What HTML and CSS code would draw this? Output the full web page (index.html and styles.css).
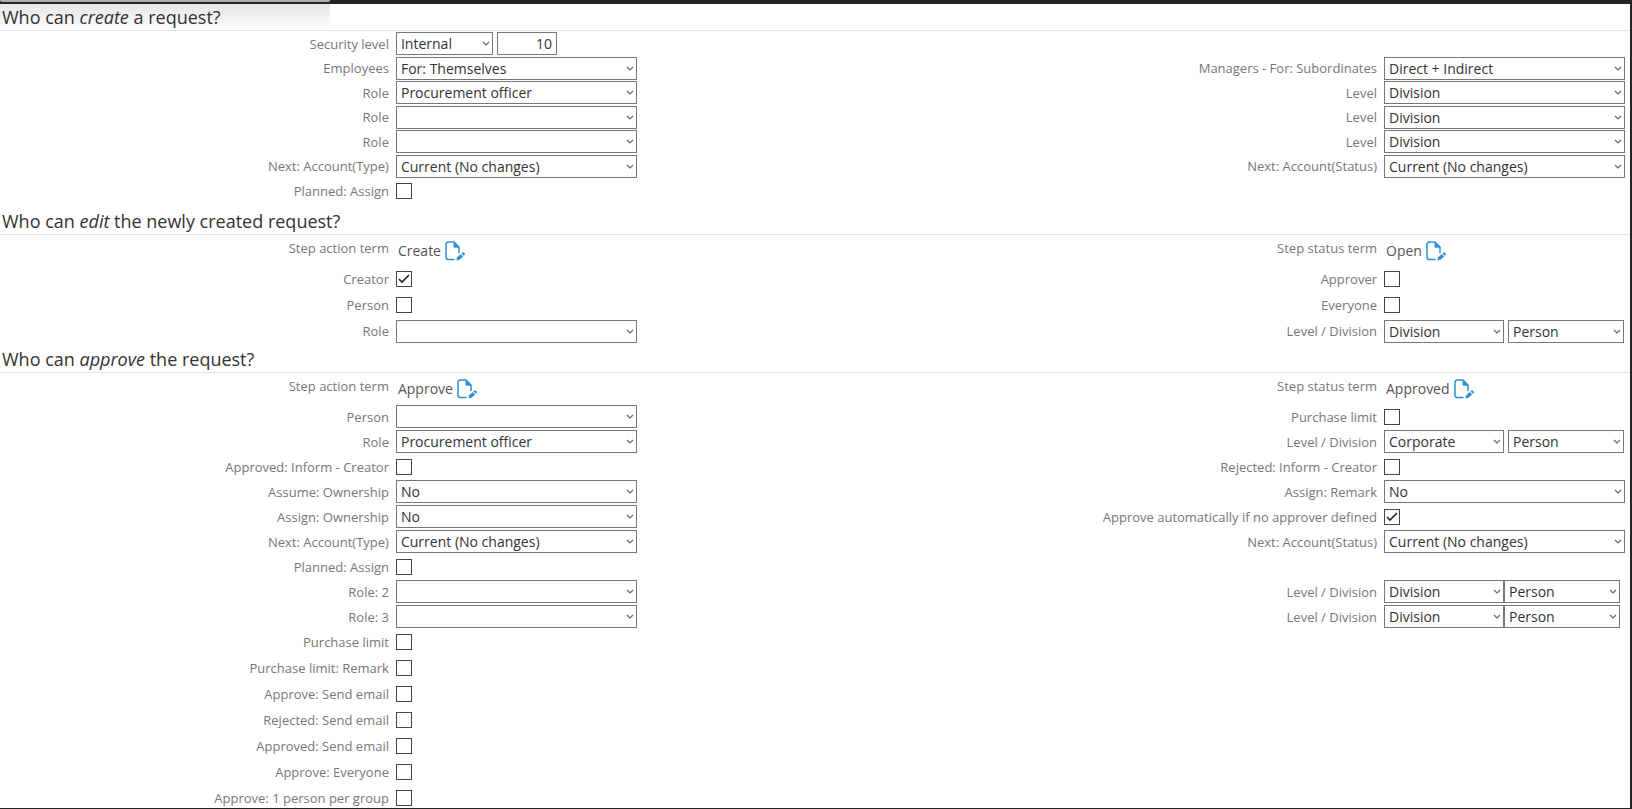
FILE: index.html
```html
<!DOCTYPE html>
<html lang="en">

<head>
    <meta charset="UTF-8">
    <meta name="viewport" content="width=device-width, initial-scale=1.0">
    <title>Request permissions</title>
    <link rel="stylesheet" href="styles.css">
</head>

<body>
    <!-- Shared pencil-on-page icon -->
    <svg class="sprite" aria-hidden="true">
        <symbol id="icon-edit" viewBox="0 0 20 20">
            <path d="M9 18.5H3.2A2.2 2.2 0 0 1 1 16.3V3.2A2.2 2.2 0 0 1 3.2 1H9l5 5v5.5" fill="none" stroke="#2f8fd6" stroke-width="1.5" stroke-linecap="round" stroke-linejoin="round" />
            <path d="M8.5 0.5L14.7 6.8H9.8A1.3 1.3 0 0 1 8.5 5.5z" fill="#2f8fd6" />
            <path d="M11.5 19.5l.6-3.2 3.7-3.3 2.3 2.5-3.6 3.3z" fill="#2f8fd6" />
            <path d="M16.5 12.4l1-.9a.9.9 0 0 1 1.2 0l1 1.1a.9.9 0 0 1 0 1.2l-.9.9z" fill="#2f8fd6" />
        </symbol>
    </svg>

    <div class="page">
        <div class="tab"></div>

        <section>
            <h2>Who can <em>create</em> a request?</h2>
            <div class="rows tight">
                <div class="row">
                    <label for="c-security">Security level</label>
                    <div class="field">
                        <select id="c-security" class="short"><option>Internal</option></select>
                        <input type="text" class="number" value="10" aria-label="Security value">
                    </div>
                </div>
                <div class="row">
                    <label for="c-employees">Employees</label>
                    <div class="field"><select id="c-employees"><option>For: Themselves</option></select></div>
                    <label for="c-managers">Managers - For: Subordinates</label>
                    <div class="field"><select id="c-managers"><option>Direct + Indirect</option></select></div>
                </div>
                <div class="row">
                    <label for="c-role1">Role</label>
                    <div class="field"><select id="c-role1"><option>Procurement officer</option></select></div>
                    <label for="c-level1">Level</label>
                    <div class="field"><select id="c-level1"><option>Division</option></select></div>
                </div>
                <div class="row">
                    <label for="c-role2">Role</label>
                    <div class="field"><select id="c-role2"><option></option></select></div>
                    <label for="c-level2">Level</label>
                    <div class="field"><select id="c-level2"><option>Division</option></select></div>
                </div>
                <div class="row">
                    <label for="c-role3">Role</label>
                    <div class="field"><select id="c-role3"><option></option></select></div>
                    <label for="c-level3">Level</label>
                    <div class="field"><select id="c-level3"><option>Division</option></select></div>
                </div>
                <div class="row">
                    <label for="c-type">Next: Account(Type)</label>
                    <div class="field"><select id="c-type"><option>Current (No changes)</option></select></div>
                    <label for="c-status">Next: Account(Status)</label>
                    <div class="field"><select id="c-status"><option>Current (No changes)</option></select></div>
                </div>
                <div class="row">
                    <label for="c-planned">Planned: Assign</label>
                    <div class="field"><input type="checkbox" id="c-planned"></div>
                </div>
            </div>
        </section>

        <section>
            <h2>Who can <em>edit</em> the newly created request?</h2>
            <div class="row term">
                <span class="label">Step action term</span>
                <div class="field">Create <button type="button" aria-label="Edit action term"><svg><use href="#icon-edit" /></svg></button></div>
                <span class="label">Step status term</span>
                <div class="field">Open <button type="button" aria-label="Edit status term"><svg><use href="#icon-edit" /></svg></button></div>
            </div>
            <div class="rows loose">
                <div class="row">
                    <label for="e-creator">Creator</label>
                    <div class="field"><input type="checkbox" id="e-creator" checked></div>
                    <label for="e-approver">Approver</label>
                    <div class="field"><input type="checkbox" id="e-approver"></div>
                </div>
                <div class="row">
                    <label for="e-person">Person</label>
                    <div class="field"><input type="checkbox" id="e-person"></div>
                    <label for="e-everyone">Everyone</label>
                    <div class="field"><input type="checkbox" id="e-everyone"></div>
                </div>
                <div class="row">
                    <label for="e-role">Role</label>
                    <div class="field"><select id="e-role"><option></option></select></div>
                    <label for="e-level">Level / Division</label>
                    <div class="field">
                        <select id="e-level" class="level"><option>Division</option></select>
                        <select class="person" aria-label="Division person"><option>Person</option></select>
                    </div>
                </div>
            </div>
        </section>

        <section>
            <h2>Who can <em>approve</em> the request?</h2>
            <div class="row term">
                <span class="label">Step action term</span>
                <div class="field">Approve <button type="button" aria-label="Edit action term"><svg><use href="#icon-edit" /></svg></button></div>
                <span class="label">Step status term</span>
                <div class="field">Approved <button type="button" aria-label="Edit status term"><svg><use href="#icon-edit" /></svg></button></div>
            </div>
            <div class="rows">
                <div class="row">
                    <label for="a-person">Person</label>
                    <div class="field"><select id="a-person"><option></option></select></div>
                    <label for="a-limit">Purchase limit</label>
                    <div class="field"><input type="checkbox" id="a-limit"></div>
                </div>
                <div class="row">
                    <label for="a-role">Role</label>
                    <div class="field"><select id="a-role"><option>Procurement officer</option></select></div>
                    <label for="a-level">Level / Division</label>
                    <div class="field">
                        <select id="a-level" class="level"><option>Corporate</option></select>
                        <select class="person" aria-label="Division person"><option>Person</option></select>
                    </div>
                </div>
                <div class="row">
                    <label for="a-inform">Approved: Inform - Creator</label>
                    <div class="field"><input type="checkbox" id="a-inform"></div>
                    <label for="a-rejected">Rejected: Inform - Creator</label>
                    <div class="field"><input type="checkbox" id="a-rejected"></div>
                </div>
                <div class="row">
                    <label for="a-assume">Assume: Ownership</label>
                    <div class="field"><select id="a-assume"><option>No</option></select></div>
                    <label for="a-remark">Assign: Remark</label>
                    <div class="field"><select id="a-remark"><option>No</option></select></div>
                </div>
                <div class="row">
                    <label for="a-assign">Assign: Ownership</label>
                    <div class="field"><select id="a-assign"><option>No</option></select></div>
                    <label for="a-auto">Approve automatically if no approver defined</label>
                    <div class="field"><input type="checkbox" id="a-auto" checked></div>
                </div>
                <div class="row">
                    <label for="a-type">Next: Account(Type)</label>
                    <div class="field"><select id="a-type"><option>Current (No changes)</option></select></div>
                    <label for="a-status">Next: Account(Status)</label>
                    <div class="field"><select id="a-status"><option>Current (No changes)</option></select></div>
                </div>
                <div class="row">
                    <label for="a-planned">Planned: Assign</label>
                    <div class="field"><input type="checkbox" id="a-planned"></div>
                </div>
                <div class="row">
                    <label for="a-role2">Role: 2</label>
                    <div class="field"><select id="a-role2"><option></option></select></div>
                    <label for="a-level2">Level / Division</label>
                    <div class="field joined">
                        <select id="a-level2" class="level"><option>Division</option></select>
                        <select class="person" aria-label="Division person 2"><option>Person</option></select>
                    </div>
                </div>
                <div class="row">
                    <label for="a-role3">Role: 3</label>
                    <div class="field"><select id="a-role3"><option></option></select></div>
                    <label for="a-level3">Level / Division</label>
                    <div class="field joined">
                        <select id="a-level3" class="level"><option>Division</option></select>
                        <select class="person" aria-label="Division person 3"><option>Person</option></select>
                    </div>
                </div>
            </div>
            <div class="rows loose">
                <div class="row">
                    <label for="a-plimit">Purchase limit</label>
                    <div class="field"><input type="checkbox" id="a-plimit"></div>
                </div>
                <div class="row">
                    <label for="a-plimit-remark">Purchase limit: Remark</label>
                    <div class="field"><input type="checkbox" id="a-plimit-remark"></div>
                </div>
                <div class="row">
                    <label for="a-mail1">Approve: Send email</label>
                    <div class="field"><input type="checkbox" id="a-mail1"></div>
                </div>
                <div class="row">
                    <label for="a-mail2">Rejected: Send email</label>
                    <div class="field"><input type="checkbox" id="a-mail2"></div>
                </div>
                <div class="row">
                    <label for="a-mail3">Approved: Send email</label>
                    <div class="field"><input type="checkbox" id="a-mail3"></div>
                </div>
                <div class="row">
                    <label for="a-everyone">Approve: Everyone</label>
                    <div class="field"><input type="checkbox" id="a-everyone"></div>
                </div>
                <div class="row">
                    <label for="a-group">Approve: 1 person per group</label>
                    <div class="field"><input type="checkbox" id="a-group"></div>
                </div>
            </div>
        </section>
    </div>
</body>

</html>
```

FILE: styles.css
```css
* {
    box-sizing: border-box;
}

body {
    font-family: "Open Sans", "Noto Sans", sans-serif;
    background-color: #fff;
    color: #333;
    margin: 0;
}

.sprite {
    display: none;
}

/* Dark window frame, the form scrolls inside it */
.page {
    height: 100vh;
    border: solid #242424;
    border-width: 4px 2px 1px 0;
    overflow-y: auto;
    scrollbar-width: none;
}

/* Edge of the panel that hangs over the top */
.tab {
    position: absolute;
    top: 0;
    left: 0;
    width: 330px;
    height: 2px;
    background-color: #aaa;
    border-radius: 0 0 4px 4px;
}

/* Soft shadow the panel casts on the form */
.tab::after {
    content: "";
    position: absolute;
    top: 4px;
    left: 0;
    width: 100%;
    height: 26px;
    background: linear-gradient(rgba(0, 0, 0, 0.1), rgba(0, 0, 0, 0));
    pointer-events: none;
}

section + section {
    margin-top: 2px;
}

h2 {
    font-size: 18px;
    font-weight: normal;
    line-height: 26px;
    margin: 0;
    padding-left: 2px;
    border-bottom: 1px solid #e2e2e2;
}

.row {
    display: grid;
    grid-template-columns: 26fr 241px 49fr 241px;
    column-gap: 7px;
    align-items: center;
    min-height: 25px;
    padding-right: 5px;
}

.tight {
    padding-bottom: 3px;
}

.tight .row:nth-child(even) {
    min-height: 24px;
}

.loose .row {
    min-height: 26px;
}

label,
.label {
    font-size: 13px;
    line-height: 20px;
    color: #777;
    text-align: right;
}

.field {
    display: flex;
    align-items: center;
    gap: 4px;
    font-size: 14px;
}

.joined {
    gap: 0;
}

.term {
    align-items: start;
    min-height: 31px;
    padding-top: 3px;
}

.term .field {
    line-height: 26px;
    padding-left: 2px;
    color: #555;
}

select,
.number {
    height: 23px;
    margin: 0;
    padding: 0 4px;
    border: 1px solid #777;
    border-radius: 0;
    background-color: #fff;
    color: #333;
    font-family: inherit;
    font-size: 14px;
}

select {
    width: 100%;
    appearance: none;
    background-image: url("data:image/svg+xml,%3Csvg xmlns='http://www.w3.org/2000/svg' width='8' height='5'%3E%3Cpath d='M1 1l3 3 3-3' fill='none' stroke='%23666' stroke-width='1.2'/%3E%3C/svg%3E");
    background-repeat: no-repeat;
    background-position: right 2px center;
}

.short {
    width: 97px;
}

.number {
    width: 60px;
    text-align: right;
}

.level {
    width: 120px;
}

.person {
    width: 116px;
}

input[type="checkbox"] {
    appearance: none;
    width: 16px;
    height: 16px;
    margin: 0;
    border: 1px solid #444;
    background-color: #fff;
}

input[type="checkbox"]:checked {
    background-image: url("data:image/svg+xml,%3Csvg xmlns='http://www.w3.org/2000/svg' width='14' height='14'%3E%3Cpath d='M2 7l3 3 7-7' fill='none' stroke='%23222' stroke-width='1.6'/%3E%3C/svg%3E");
}

button {
    width: 20px;
    height: 20px;
    padding: 0;
    border: none;
    background: none;
    cursor: pointer;
}

button svg {
    display: block;
    width: 20px;
    height: 20px;
}
```
